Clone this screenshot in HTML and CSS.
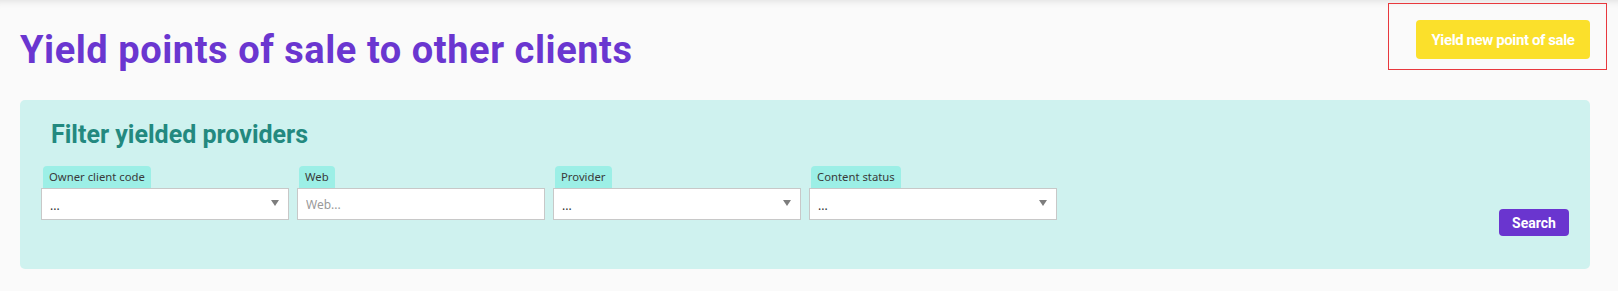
FILE: index.html
```html
<!DOCTYPE html>
<html lang="en">
<head>
    <meta charset="UTF-8">
    <meta name="viewport" content="width=device-width, initial-scale=1.0">
    <title>Yield points of sale</title>
    <link rel="stylesheet" href="styles.css">
</head>
<body>
    <div class="page">
        <div class="page-header">
            <h1 class="page-title">Yield points of sale to other clients</h1>
            <div class="header-actions">
                <button class="btn btn-yellow" type="button">Yield new point of sale</button>
            </div>
        </div>

        <div class="filter-panel">
            <h2 class="filter-title">Filter yielded providers</h2>
            <div class="filter-row">
                <div class="filter-fields">
                    <div class="field">
                        <div class="field-label">Owner client code</div>
                        <div class="field-select">
                            <span>...</span>
                            <span class="caret"></span>
                        </div>
                    </div>
                    <div class="field">
                        <div class="field-label">Web</div>
                        <input class="field-input" type="text" placeholder="Web...">
                    </div>
                    <div class="field">
                        <div class="field-label">Provider</div>
                        <div class="field-select">
                            <span>...</span>
                            <span class="caret"></span>
                        </div>
                    </div>
                    <div class="field">
                        <div class="field-label">Content status</div>
                        <div class="field-select">
                            <span>...</span>
                            <span class="caret"></span>
                        </div>
                    </div>
                </div>
                <button class="btn btn-purple" type="button">Search</button>
            </div>
        </div>
    </div>
</body>
</html>
```

FILE: styles.css
```css
* {
    box-sizing: border-box;
    margin: 0;
    padding: 0;
}

body {
    background-color: #fafafa;
    font-family: Roboto, "Liberation Sans", sans-serif;
    width: 1618px;
    height: 291px;
    overflow: hidden;
}

.page {
    height: 100%;
    padding: 20px 28px 0 20px;
    box-shadow: inset 0 8px 8px -8px rgba(0, 0, 0, 0.14);
}

.page-header {
    display: flex;
    justify-content: space-between;
    align-items: flex-start;
}

.page-title {
    margin-top: 8px;
    font-size: 38px;
    line-height: 44px;
    font-weight: 700;
    letter-spacing: 0.55px;
    color: #6a36d0;
}

.header-actions {
    margin: -17px -17px 0 0;
    padding: 16px 16px 10px 27px;
    border: 1px solid #e8383d;
}

.btn {
    border: none;
    border-radius: 4px;
    color: #fff;
    font-family: Roboto, "Liberation Sans", sans-serif;
    font-weight: 700;
    cursor: pointer;
}

.btn-yellow {
    width: 174px;
    height: 39px;
    background-color: #fbe02b;
    font-size: 15px;
    letter-spacing: -0.4px;
}

.btn-purple {
    height: 27px;
    width: 70px;
    margin-top: 43px;
    background-color: #6a35cf;
    font-size: 14px;
}

.filter-panel {
    margin-top: 28px;
    padding: 20px 21px 33px 21px;
    background-color: #cff2ef;
    border-radius: 5px;
}

.filter-title {
    margin-left: 10px;
    font-size: 25px;
    line-height: 30px;
    font-weight: 700;
    color: #23897f;
}

.filter-row {
    display: flex;
    justify-content: space-between;
    align-items: flex-start;
    margin-top: 16px;
}

.filter-fields {
    display: flex;
    gap: 8px;
}

.field {
    width: 248px;
    display: flex;
    flex-direction: column;
    align-items: flex-start;
}

.field-label {
    margin-left: 2px;
    height: 22px;
    padding: 0 6px;
    background-color: #9cefe6;
    border-radius: 4px 4px 0 0;
    font-family: "Noto Sans", sans-serif;
    font-size: 11.3px;
    line-height: 22px;
    color: #3a3a3a;
}

.field-select,
.field-input {
    width: 100%;
    height: 32px;
    background-color: #fff;
    border: 1px solid #c8c8c8;
    font-family: "Noto Sans", sans-serif;
    font-size: 12px;
    color: #333;
}

.field-select {
    display: flex;
    justify-content: space-between;
    align-items: center;
    padding: 2px 9px 0 8px;
}

.field-input {
    padding: 0 8px;
    outline: none;
}

.field-input::placeholder {
    color: #9a9a9a;
}

.caret {
    width: 0;
    height: 0;
    margin-top: -4px;
    border-left: 4px solid transparent;
    border-right: 4px solid transparent;
    border-top: 6px solid #7d7d7d;
}
```
